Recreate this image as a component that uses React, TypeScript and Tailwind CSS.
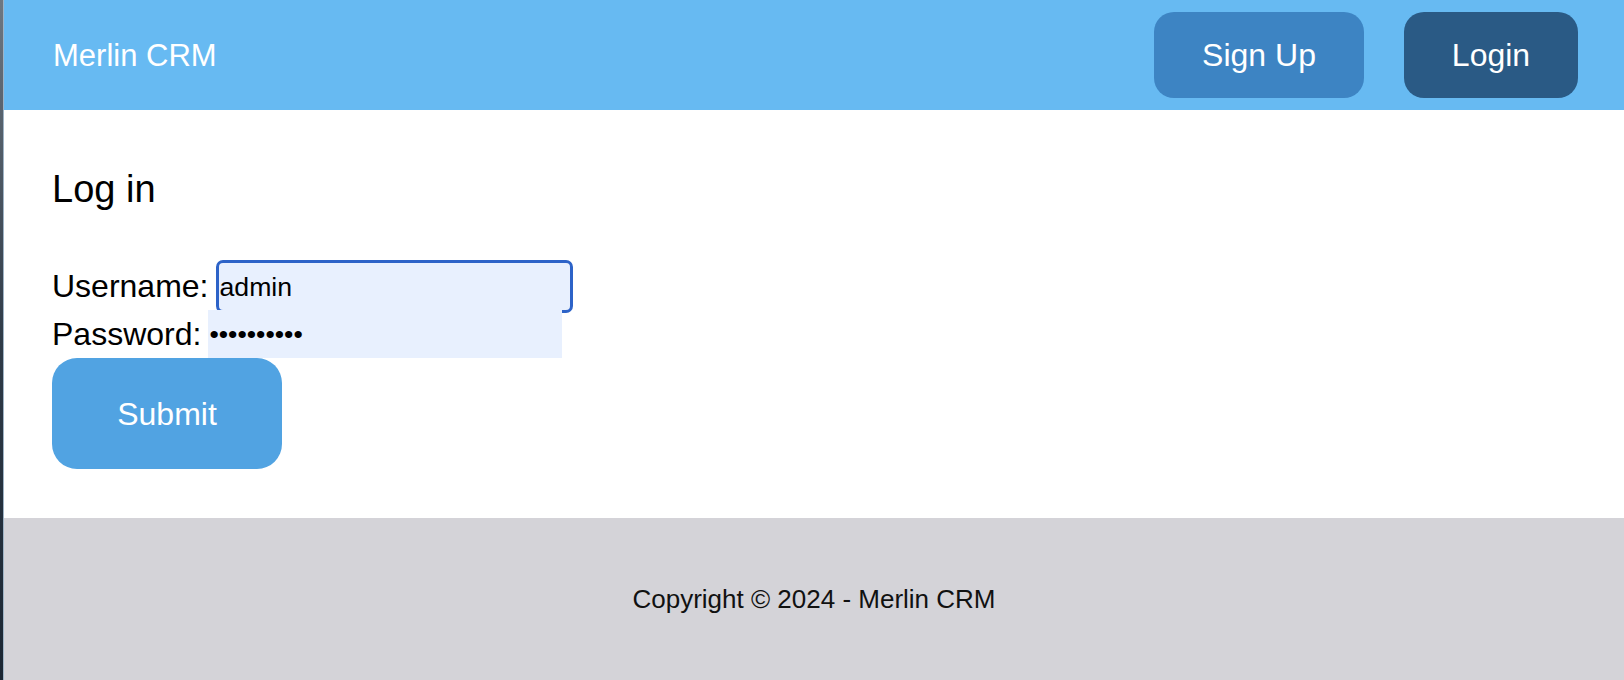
import React from "react";

export default function App() {
  const font = { fontFamily: '"Liberation Sans", Arial, sans-serif' };
  return (
    <div className="flex h-[680px] w-[1624px] overflow-hidden" style={font}>
      <div className="w-[3px] shrink-0 bg-linear-to-b from-[#6e7882] via-[#2f3b48] to-[#1b2633]" />
      <div className="flex min-w-0 flex-1 flex-col border-l border-l-[#9fb4c6]">
        <header className="flex h-[110px] shrink-0 items-center justify-between bg-[#67baf2] pl-[49px] pr-[46px]">
          <div className="text-[31px] leading-none text-white">Merlin CRM</div>
          <div className="flex items-center gap-[40px]">
            <button className="h-[86px] w-[210px] rounded-[20px] bg-[#3d84c3] text-[32px] leading-none text-white">
              Sign Up
            </button>
            <button className="h-[86px] w-[174px] rounded-[20px] bg-[#2a5a85] text-[32px] leading-none text-white">
              Login
            </button>
          </div>
        </header>
        <main className="flex h-[408px] shrink-0 flex-col bg-white pl-[48px] pt-[60px] pb-[48px]">
          <h1 className="h-[38px] text-[38px] leading-none text-black">Log in</h1>
          <div className="mt-[54px] flex flex-col">
            <div className="flex h-[48px] items-center">
              <span className="text-[32px] leading-none text-black">Username:</span>
              <input
                type="text"
                defaultValue="admin"
                readOnly
                className="ml-[10px] h-[47px] w-[351px] rounded-[4px] bg-[#e8f0fe] px-[1px] pt-[3px] text-[26.67px] text-black outline-[3px] outline-solid outline-[#2d63c8]"
                style={font}
              />
            </div>
            <div className="flex h-[48px] items-center">
              <span className="text-[32px] leading-none text-black">Password:</span>
              <input
                type="password"
                defaultValue="abcdefghij"
                readOnly
                className="ml-[7px] h-[48px] w-[354px] bg-[#e8f0fe] px-[1px] text-[26.67px] text-black outline-none"
                style={font}
              />
            </div>
          </div>
          <button className="h-[111px] w-[230px] rounded-[25px] bg-[#51a3e2] text-[32px] leading-none text-white">
            Submit
          </button>
        </main>
        <footer className="flex flex-1 items-center justify-center bg-[#d4d3d8]">
          <span className="text-[26px] leading-none text-[#111]">Copyright © 2024 - Merlin CRM</span>
        </footer>
      </div>
    </div>
  );
}
